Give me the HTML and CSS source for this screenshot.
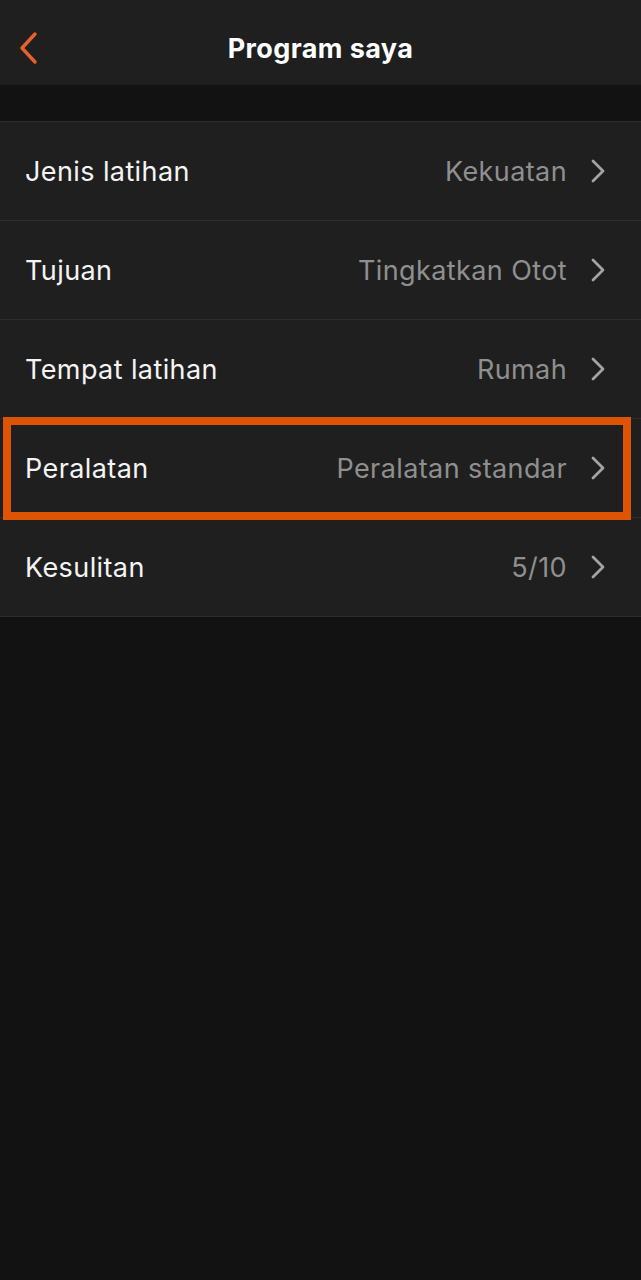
FILE: index.html
```html
<!DOCTYPE html>
<html lang="id">
<head>
    <meta charset="UTF-8">
    <meta name="viewport" content="width=device-width, initial-scale=1.0">
    <title>Program saya</title>
    <link rel="stylesheet" href="styles.css">
</head>
<body>
    <div class="header">
        <a class="back" href="#">
            <svg width="24" height="34" viewBox="0 0 24 34"><path d="M19 3 L6 17 L19 31" fill="none" stroke="#e8612c" stroke-width="3.4" stroke-linecap="round" stroke-linejoin="round"/></svg>
        </a>
        <h1>Program saya</h1>
    </div>
    <div class="gap"></div>
    <ul class="list">
        <li class="row"><span class="label">Jenis latihan</span><span class="value">Kekuatan</span><svg class="chev" width="14" height="24" viewBox="0 0 14 24"><path d="M2 2 L12 12 L2 22" /></svg></li>
        <li class="row"><span class="label">Tujuan</span><span class="value">Tingkatkan Otot</span><svg class="chev" width="14" height="24" viewBox="0 0 14 24"><path d="M2 2 L12 12 L2 22" /></svg></li>
        <li class="row"><span class="label">Tempat latihan</span><span class="value">Rumah</span><svg class="chev" width="14" height="24" viewBox="0 0 14 24"><path d="M2 2 L12 12 L2 22" /></svg></li>
        <li class="row marked"><span class="label">Peralatan</span><span class="value">Peralatan standar</span><svg class="chev" width="14" height="24" viewBox="0 0 14 24"><path d="M2 2 L12 12 L2 22" /></svg></li>
        <li class="row"><span class="label">Kesulitan</span><span class="value">5/10</span><svg class="chev" width="14" height="24" viewBox="0 0 14 24"><path d="M2 2 L12 12 L2 22" /></svg></li>
    </ul>
</body>
</html>
```

FILE: styles.css
```css
body {
    margin: 0;
    background-color: #121212;
    font-family: Inter, "Noto Sans", sans-serif;
    color: #ffffff;
}

.header {
    height: 85px;
    background-color: #1f1f1f;
    display: flex;
    align-items: center;
    justify-content: center;
    position: relative;
}

.header h1 {
    margin: 0;
    font-size: 27px;
    font-weight: 700;
    letter-spacing: 0.4px;
    padding-top: 12px;
}

.back {
    position: absolute;
    left: 16px;
    top: 31px;
    display: block;
}

.back svg {
    display: block;
}

.gap {
    height: 36px;
}

.list {
    list-style: none;
    margin: 0;
    padding: 0;
    background-color: #1f1f1f;
    border-top: 1px solid #2d2d2d;
}

.row {
    height: 98px;
    border-bottom: 1px solid #2d2d2d;
    display: flex;
    align-items: center;
    padding: 0 36px 0 25px;
    position: relative;
    font-size: 27px;
    letter-spacing: 0.4px;
}

.label {
    flex: 1;
    color: #f4f4f4;
}

.value {
    color: #8f8f8f;
}

.chev {
    margin-left: 24px;
    fill: none;
    stroke: #a4a4a4;
    stroke-width: 2.8;
    stroke-linecap: round;
    stroke-linejoin: round;
}

/* kotak sorotan oranye */
.marked::after {
    content: "";
    position: absolute;
    left: 3px;
    right: 10px;
    top: -2px;
    bottom: -3px;
    border: 8px solid #dd5405;
}
```
